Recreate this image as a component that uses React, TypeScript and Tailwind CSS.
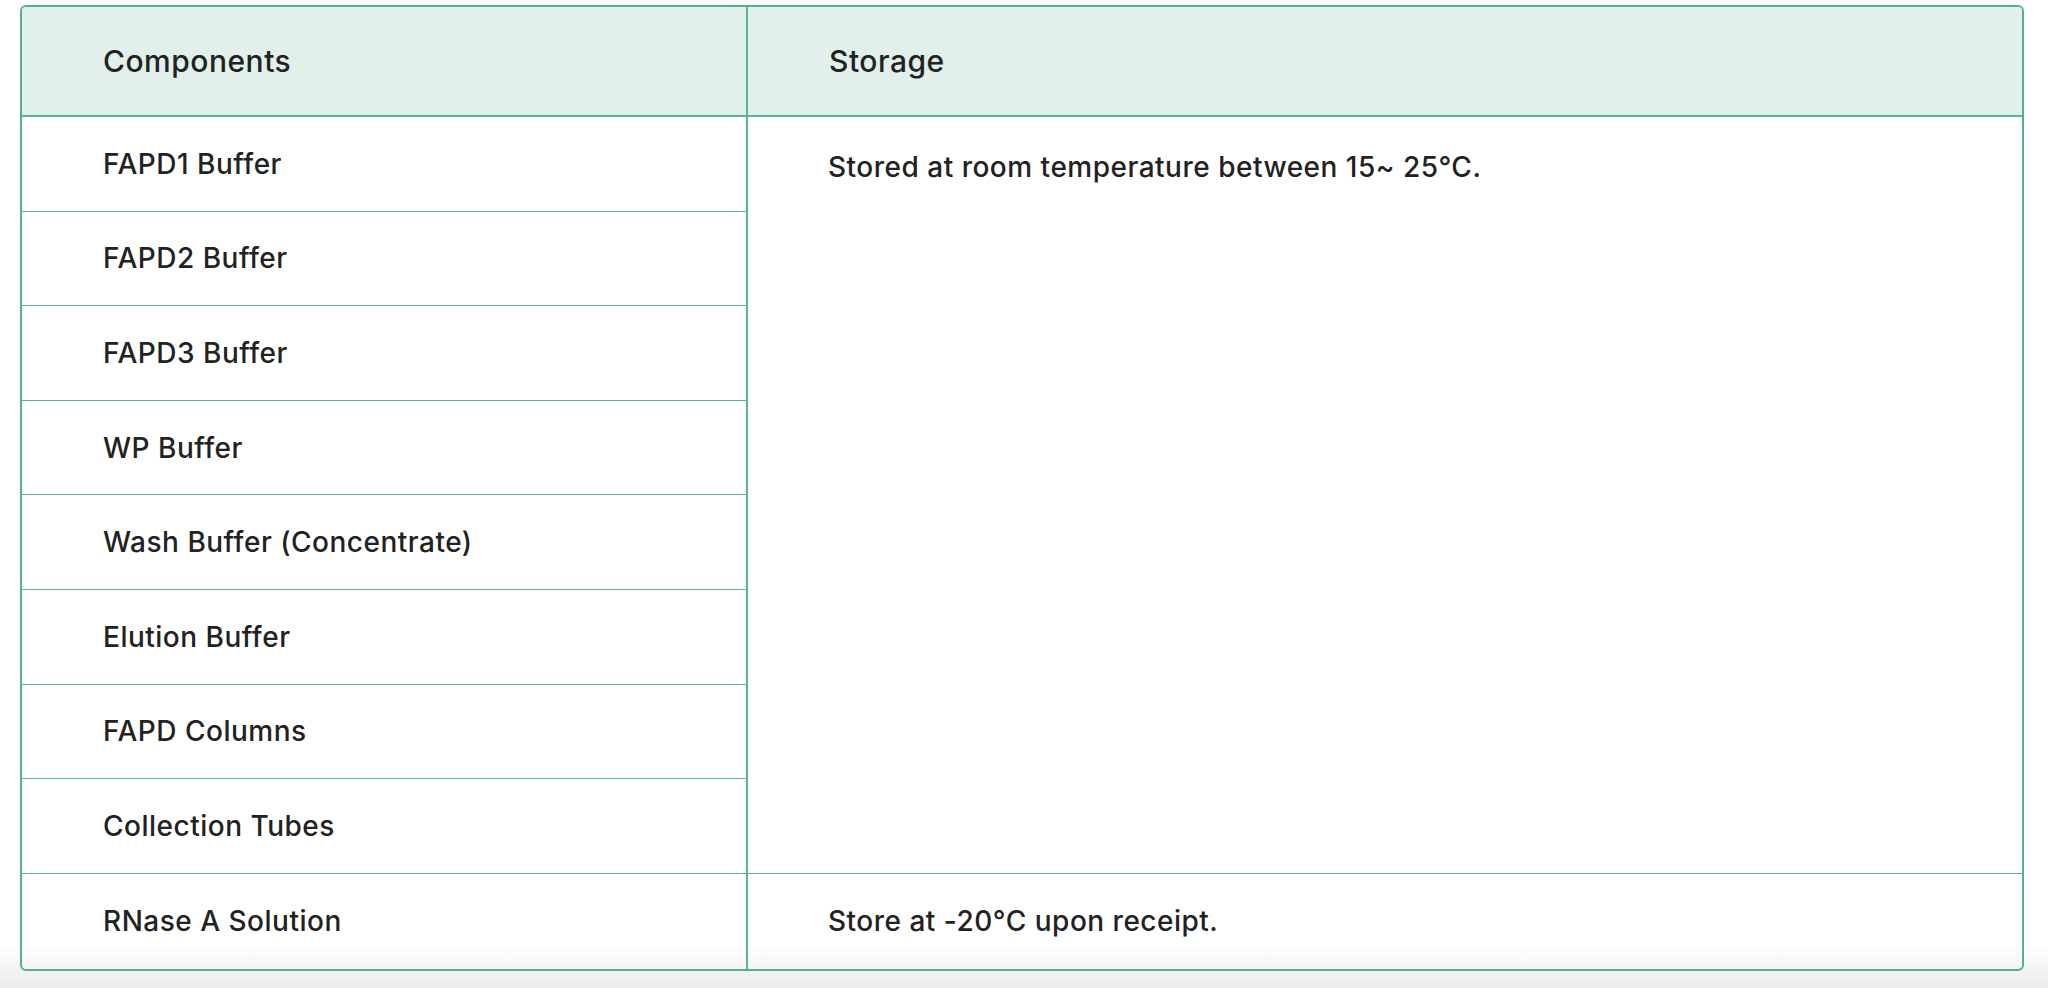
const leftRows = [
  'FAPD1 Buffer',
  'FAPD2 Buffer',
  'FAPD3 Buffer',
  'WP Buffer',
  'Wash Buffer (Concentrate)',
  'Elution Buffer',
  'FAPD Columns',
  'Collection Tubes',
];

const App = () => {
  return (
    <div
      className="w-[2048px] h-[988px] pt-[5px] pl-[20px] bg-[linear-gradient(to_bottom,#ffffff_0px,#ffffff_945px,#ececec_988px)] text-[#222222]"
      style={{ fontFamily: 'Inter, "Noto Sans", sans-serif' }}
    >
      <div className="w-[2004px] border-2 border-[#55b18b] rounded-[6px] overflow-hidden">
        <div className="grid grid-cols-[726px_1fr] text-[28px] tracking-[0.5px] font-medium">
          {/* Header */}
          <div className="h-[110px] bg-[#e1f0eb] border-b-2 border-r-2 border-[#5ab48e] flex items-center pl-[81px] text-[30px]">
            Components
          </div>
          <div className="h-[110px] bg-[#e1f0eb] border-b-2 border-[#5ab48e] flex items-center pl-[81px] text-[30px]">
            Storage
          </div>

          {/* Room temperature group */}
          <div className="flex flex-col border-r-2 border-[#5ab48e]">
            {leftRows.map((name) => (
              <div
                key={name}
                className="h-[94.6px] border-b-[1.5px] border-[#5ab48e] flex items-center pl-[81px]"
              >
                {name}
              </div>
            ))}
          </div>
          <div className="border-b-[1.5px] border-[#5ab48e] pl-[80px] pt-[29px]">
            Stored at room temperature between 15~ 25°C.
          </div>

          {/* Frozen */}
          <div className="h-[95px] border-r-2 border-[#5ab48e] flex items-center pl-[81px]">
            RNase A Solution
          </div>
          <div className="h-[95px] flex items-center pl-[80px]">
            Store at -20°C upon receipt.
          </div>
        </div>
      </div>
    </div>
  );
};

export default App;
